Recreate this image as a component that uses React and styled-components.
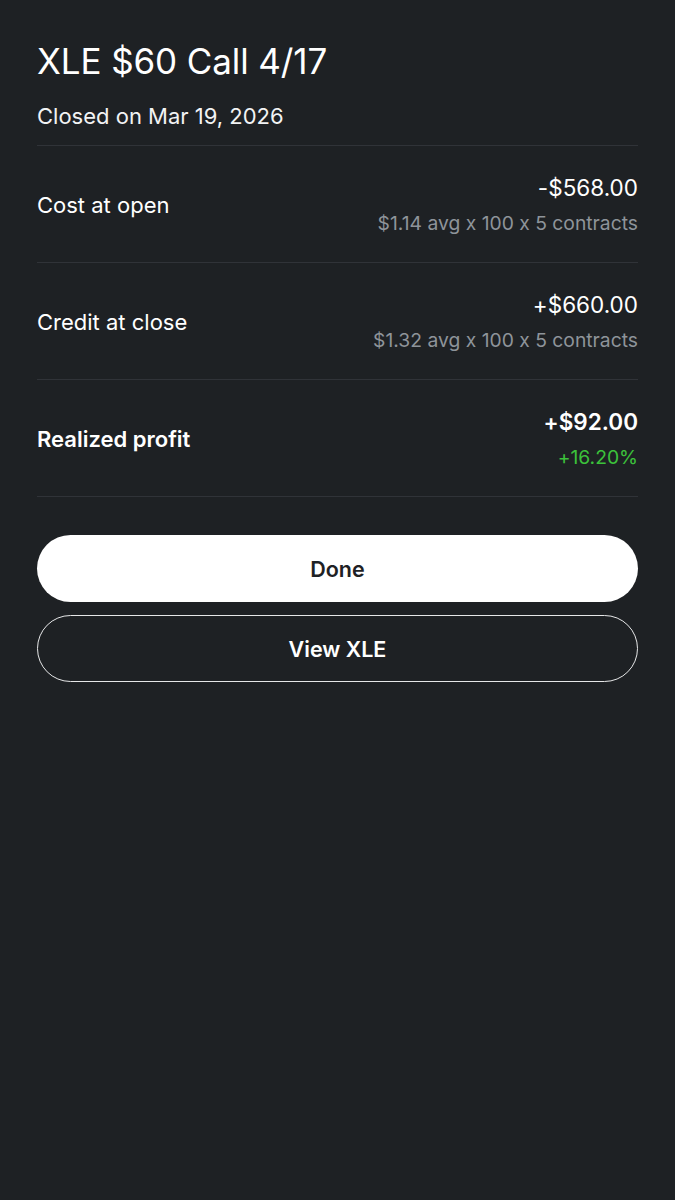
import React from "react";
import styled, { createGlobalStyle } from "styled-components";

const Global = createGlobalStyle`
  html, body { margin: 0; padding: 0; background: #1e2124; }
  body {
    font-family: Inter, "Noto Sans", sans-serif;
    font-feature-settings: "calt" 0;
    color: #ffffff;
    -webkit-font-smoothing: antialiased;
  }
`;

const Page = styled.div`
  min-height: 1200px;
  background: #1e2124;
  padding: 40px 37px 0;
  box-sizing: border-box;
`;

const Title = styled.h1`
  margin: 0;
  font-size: 35px;
  line-height: 42px;
  font-weight: 400;
  letter-spacing: -0.1px;
`;

const Subtitle = styled.div`
  margin-top: 21px;
  font-size: 22px;
  line-height: 27px;
  color: #f2f3f4;
  padding-bottom: 15px;
  border-bottom: 1px solid #303338;
`;

const Row = styled.div`
  display: flex;
  align-items: center;
  justify-content: space-between;
  height: 116px;
  border-bottom: 1px solid #303338;
`;

const Label = styled.div`
  font-size: 22px;
  line-height: 28px;
  padding-top: 2px;
  font-weight: ${(p) => (p.$bold ? 600 : 400)};
  color: #ffffff;
`;

const Values = styled.div`
  display: flex;
  flex-direction: column;
  align-items: flex-end;
  gap: 10px;
  padding-top: 2px;
`;

const Amount = styled.div`
  font-size: 22.5px;
  line-height: 26px;
  font-weight: ${(p) => (p.$bold ? 600 : 400)};
`;

const Detail = styled.div`
  font-size: 19.3px;
  line-height: 24px;
  color: ${(p) => p.$color || "#8e949a"};
`;

const Buttons = styled.div`
  display: flex;
  flex-direction: column;
  gap: 13px;
  margin-top: 38px;
`;

const Button = styled.button`
  height: 67px;
  border-radius: 34px;
  font-family: inherit;
  font-size: 21.5px;
  font-weight: 600;
  cursor: pointer;
  background: ${(p) => (p.$primary ? "#ffffff" : "transparent")};
  color: ${(p) => (p.$primary ? "#1e2124" : "#ffffff")};
  border: ${(p) => (p.$primary ? "none" : "1.5px solid #e6e7e8")};
`;

const rows = [
  { label: "Cost at open", amount: "-$568.00", detail: "$1.14 avg x 100 x 5 contracts" },
  { label: "Credit at close", amount: "+$660.00", detail: "$1.32 avg x 100 x 5 contracts" },
  { label: "Realized profit", amount: "+$92.00", detail: "+16.20%", bold: true, color: "#3cc13b" },
];

export default function App() {
  return (
    <>
      <Global />
      <Page>
        <Title>XLE $60 Call 4/17</Title>
        <Subtitle>Closed on Mar 19, 2026</Subtitle>
        {rows.map((r) => (
          <Row key={r.label}>
            <Label $bold={r.bold}>{r.label}</Label>
            <Values>
              <Amount $bold={r.bold}>{r.amount}</Amount>
              <Detail $color={r.color}>{r.detail}</Detail>
            </Values>
          </Row>
        ))}
        <Buttons>
          <Button $primary>Done</Button>
          <Button>View XLE</Button>
        </Buttons>
      </Page>
    </>
  );
}
